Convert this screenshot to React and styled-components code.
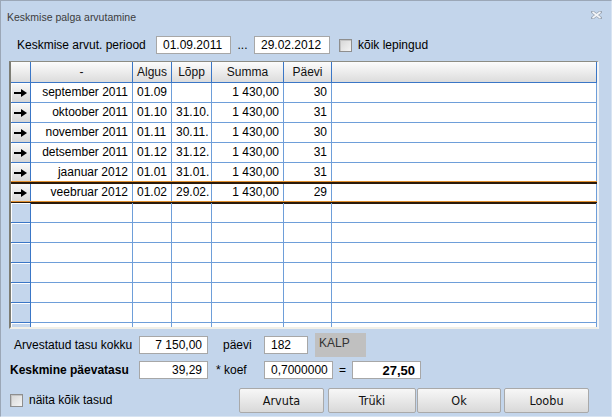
import React from 'react';
import styled, { createGlobalStyle } from 'styled-components';

const GlobalStyle = createGlobalStyle`
  html, body { margin: 0; padding: 0; background: #c3d5eb; }
  body {
    font-family: "Liberation Sans", Arial, sans-serif;
    font-size: 12px;
    color: #000;
  }
  * { box-sizing: border-box; }
`;

const Window = styled.div`
  width: 612px;
  height: 417px;
  background: #c3d5eb;
  border: 1px solid #9ba7b7;
  border-right-color: #d8e4f2;
  border-bottom-color: #d8e4f2;
  display: flex;
  flex-direction: column;
  overflow: hidden;
`;

const TitleBar = styled.div`
  height: 32px;
  display: flex;
  align-items: center;
  justify-content: space-between;
  padding: 0 9px 0 6px;
`;

const Title = styled.span`
  font-size: 10.5px;
  color: #3c3c3c;
`;

const CloseIcon = styled.svg`
  align-self: flex-start;
  margin-top: 10px;
`;

const PeriodRow = styled.div`
  display: flex;
  align-items: center;
  height: 18px;
  margin-top: 3px;
  padding-left: 16px;
`;

const Label = styled.span`
  width: ${p => p.$w || 'auto'};
  padding-left: ${p => p.$pl || '0px'};
  font-weight: ${p => (p.$bold ? 'bold' : 'normal')};
  white-space: nowrap;
  flex-shrink: 0;
`;

const TextBox = styled.div`
  width: ${p => p.$w}px;
  height: 18px;
  flex-shrink: 0;
  border: 1px solid #a7a7a7;
  background: #fff;
  display: flex;
  align-items: center;
  justify-content: ${p => (p.$right ? 'flex-end' : 'flex-start')};
  padding: 0 ${p => (p.$right ? '5px' : '0')} 0 ${p => (p.$right ? '0' : '6px')};
  font-weight: ${p => (p.$bold ? 'bold' : 'normal')};
  font-size: ${p => (p.$bold ? '13px' : '12px')};
`;

const Dots = styled.span`
  width: 23px;
  text-align: center;
  flex-shrink: 0;
`;

const CheckBox = styled.div`
  width: 13px;
  height: 13px;
  flex-shrink: 0;
  margin-left: ${p => p.$ml || 0}px;
  border: 1px solid #8e8e8e;
  background: linear-gradient(135deg, #d6d6d6, #f4f4f4);
  box-shadow: inset 1px 1px 0 #c4c4c4;
`;

const CheckLabel = styled.span`
  margin-left: 6px;
  white-space: nowrap;
`;

const GridBox = styled.div`
  margin: 7px 0 0 8px;
  width: 590px;
  height: 268px;
  flex-shrink: 0;
  border-top: 1px solid #8c8c84;
  border-left: 2px solid #7c7c74;
  border-right: 2px solid #f5f5f5;
  border-bottom: 2px solid #f2f0e8;
  background: #fff;
  overflow: hidden;
`;

const HeadRow = styled.div`
  display: flex;
  height: 21px;
`;

const HeadCell = styled.div`
  width: ${p => p.$w}px;
  flex-shrink: 0;
  border-right: 1px solid #3a76c6;
  border-bottom: 1px solid #3a76c6;
  background: linear-gradient(#fcfcfc, #dcdcdc);
  text-align: center;
  line-height: 20px;
  color: #111;
`;

const Row = styled.div`
  display: flex;
  height: 20px;
  position: relative;

  ${p => p.$selected && `
    &::before, &::after {
      content: '';
      position: absolute;
      left: 0;
      right: 0;
      height: 3px;
      background: linear-gradient(#e3912f 0 1px, #2b1a0a 1px 3px);
    }
    &::before { top: -2px; }
    &::after { bottom: -1px; }
  `}
`;

const Cell = styled.div`
  width: ${p => p.$w}px;
  flex-shrink: 0;
  border-right: 1px solid #6e9ed9;
  border-bottom: 1px solid #6e9ed9;
  padding: 0 4px;
  text-align: ${p => p.$align};
  line-height: 19px;
  white-space: nowrap;
  overflow: hidden;
`;

const Indicator = styled.div`
  width: 20px;
  flex-shrink: 0;
  border-right: 1px solid #3a76c6;
  border-bottom: 1px solid #3a76c6;
  display: flex;
  align-items: center;
  justify-content: center;
  background: ${p => (p.$filled ? 'linear-gradient(#fafafa, #d6d6d6)' : '#c4d6ec')};
  box-shadow: inset 1px 1px 0 #fff;
`;

const BottomRow = styled.div`
  display: flex;
  align-items: center;
  height: ${p => p.$h}px;
  margin-top: ${p => p.$mt}px;
  flex-shrink: 0;
`;

const CodeBox = styled.div`
  width: 51px;
  height: 24px;
  margin-left: 7px;
  background: #c0c0c0;
  padding: 3px 0 0 4px;
  color: #333;
  align-self: flex-start;
`;

const Buttons = styled.div`
  display: flex;
  margin-left: auto;
  margin-right: 22px;
  align-self: flex-end;
`;

const Button = styled.button`
  width: ${p => p.$w}px;
  height: 25px;
  margin-left: ${p => p.$ml}px;
  border: 1px solid #a9a9a9;
  border-radius: 2px;
  background: linear-gradient(#f7f7f7, #d9d9d9);
  font-family: "Liberation Sans Narrow", "DejaVu Sans Condensed", "Liberation Sans", sans-serif;
  font-size: 12.5px;
  color: #111;
  padding: 0;
`;

const COLS = [
  { key: 'name', title: '-', w: 102, align: 'right' },
  { key: 'start', title: 'Algus', w: 39, align: 'left' },
  { key: 'end', title: 'Lõpp', w: 40, align: 'left' },
  { key: 'sum', title: 'Summa', w: 72, align: 'right' },
  { key: 'days', title: 'Päevi', w: 48, align: 'right' },
  { key: 'fill', title: '', w: 265, align: 'left' },
];

const ROWS = [
  { name: 'september 2011', start: '01.09', end: '', sum: '1 430,00', days: '30' },
  { name: 'oktoober 2011', start: '01.10', end: '31.10.', sum: '1 430,00', days: '31' },
  { name: 'november 2011', start: '01.11', end: '30.11.', sum: '1 430,00', days: '30' },
  { name: 'detsember 2011', start: '01.12', end: '31.12.', sum: '1 430,00', days: '31' },
  { name: 'jaanuar 2012', start: '01.01', end: '31.01.', sum: '1 430,00', days: '31' },
  { name: 'veebruar 2012', start: '01.02', end: '29.02.', sum: '1 430,00', days: '29', selected: true },
];

const EMPTY_ROWS = 7;

function Arrow() {
  return (
    <svg width="13" height="8" viewBox="0 0 13 8">
      <rect x="0" y="3" width="8" height="2" fill="#000" />
      <path d="M7 0 L13 4 L7 8 Z" fill="#000" />
    </svg>
  );
}

export default function App() {
  return (
    <>
      <GlobalStyle />
      <Window>
        <TitleBar>
          <Title>Keskmise palga arvutamine</Title>
          <CloseIcon width="11" height="8" viewBox="0 0 11 8">
            <path d="M1.5 1 L9.5 7 M9.5 1 L1.5 7" stroke="#9aa5b3" strokeWidth="3.2" strokeLinecap="square" />
            <path d="M1.5 1 L9.5 7 M9.5 1 L1.5 7" stroke="#f4f6f9" strokeWidth="1.6" />
          </CloseIcon>
        </TitleBar>

        <PeriodRow>
          <Label $w="139px">Keskmise arvut. periood</Label>
          <TextBox $w={75}>01.09.2011</TextBox>
          <Dots>...</Dots>
          <TextBox $w={76}>29.02.2012</TextBox>
          <CheckBox $ml={9} />
          <CheckLabel>kõik lepingud</CheckLabel>
        </PeriodRow>

        <GridBox>
          <HeadRow>
            <HeadCell $w={20} />
            {COLS.map(c => (
              <HeadCell key={c.key} $w={c.w}>{c.title}</HeadCell>
            ))}
          </HeadRow>
          {ROWS.map(r => (
            <Row key={r.name} $selected={r.selected}>
              <Indicator $filled><Arrow /></Indicator>
              {COLS.map(c => (
                <Cell key={c.key} $w={c.w} $align={c.align}>{r[c.key]}</Cell>
              ))}
            </Row>
          ))}
          {Array.from({ length: EMPTY_ROWS }).map((_, i) => (
            <Row key={'e' + i}>
              <Indicator />
              {COLS.map(c => (
                <Cell key={c.key} $w={c.w} $align={c.align} />
              ))}
            </Row>
          ))}
        </GridBox>

        <BottomRow $h={24} $mt={4}>
          <Label $w="138px" $pl="13px">Arvestatud tasu kokku</Label>
          <TextBox $w={69} $right>7 150,00</TextBox>
          <Label $w="56px" $pl="15px">päevi</Label>
          <TextBox $w={44}>182</TextBox>
          <CodeBox>KALP</CodeBox>
        </BottomRow>

        <BottomRow $h={18} $mt={4}>
          <Label $w="138px" $pl="9px" $bold>Keskmine päevatasu</Label>
          <TextBox $w={69} $right>39,29</TextBox>
          <Label $w="56px" $pl="8px">* koef</Label>
          <TextBox $w={69}>0,7000000</TextBox>
          <Label $w="19px" $pl="6px">=</Label>
          <TextBox $w={69} $right $bold>27,50</TextBox>
        </BottomRow>

        <BottomRow $h={26} $mt={8}>
          <CheckBox $ml={9} />
          <CheckLabel>näita kõik tasud</CheckLabel>
          <Buttons>
            <Button $w={85} $ml={0}>Arvuta</Button>
            <Button $w={88} $ml={4}>Trüki</Button>
            <Button $w={84} $ml={1}>Ok</Button>
            <Button $w={85} $ml={3}>Loobu</Button>
          </Buttons>
        </BottomRow>
      </Window>
    </>
  );
}
